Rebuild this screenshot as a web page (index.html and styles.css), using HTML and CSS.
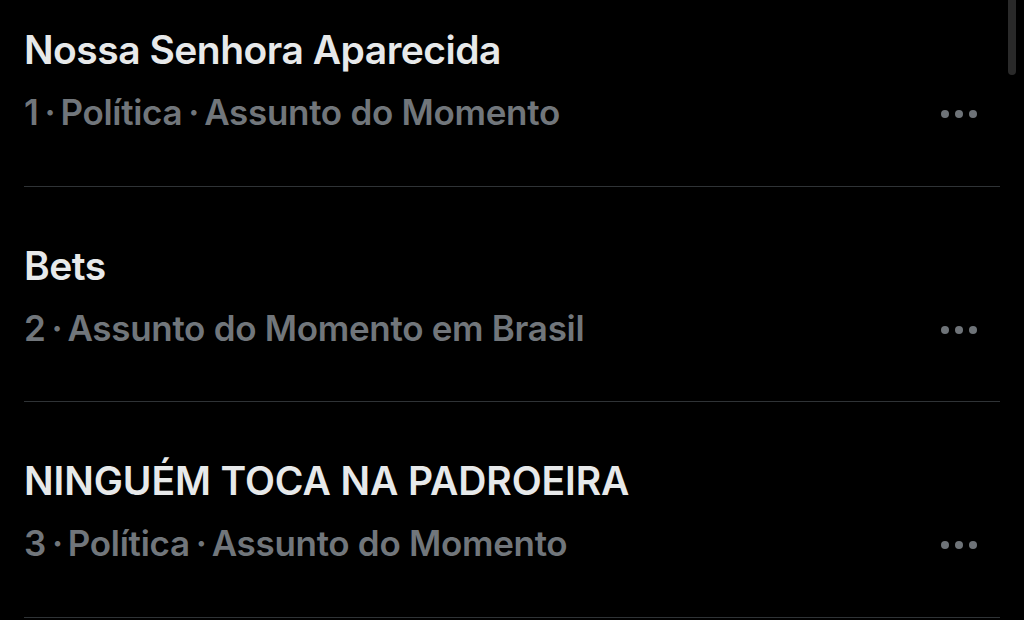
FILE: index.html
```html
<!DOCTYPE html>
<html>
<head>
<meta charset="utf-8">
<link rel="stylesheet" href="styles.css">
</head>
<body>
<div class="scroller">
  <div class="list">
    <div class="trend">
      <div class="text">
        <div class="title">Nossa Senhora Aparecida</div>
        <div class="meta">1<span class="dot">·</span>Política<span class="dot">·</span>Assunto do Momento</div>
      </div>
      <div class="more"><span></span><span></span><span></span></div>
    </div>
    <div class="trend">
      <div class="text">
        <div class="title">Bets</div>
        <div class="meta">2<span class="dot">·</span>Assunto do Momento em Brasil</div>
      </div>
      <div class="more"><span></span><span></span><span></span></div>
    </div>
    <div class="trend">
      <div class="text">
        <div class="title caps">NINGUÉM TOCA NA PADROEIRA</div>
        <div class="meta">3<span class="dot">·</span>Política<span class="dot">·</span>Assunto do Momento</div>
      </div>
      <div class="more"><span></span><span></span><span></span></div>
    </div>
  </div>
  <div class="scrollbar"></div>
</div>
</body>
</html>
```
FILE: styles.css
```css
html, body {
  margin: 0;
  padding: 0;
  background: #000;
  height: 100%;
  overflow: hidden;
}
.scroller {
  position: relative;
  width: 1024px;
  height: 620px;
  overflow: hidden;
  font-family: Inter, "Noto Sans", sans-serif;
}
.list {
  margin-top: -29px;
  padding: 0 24px;
}
.trend {
  display: flex;
  align-items: flex-end;
  border-bottom: 1px solid #2f3336;
  padding: 48px 0 42.5px;
}
.text {
  flex: 1;
}
.title {
  color: #e7e9ea;
  font-weight: 600;
  font-size: 39px;
  line-height: 62px;
  letter-spacing: -0.5px;
}
.title.caps {
  letter-spacing: -0.1px;
}
.meta {
  color: #71767b;
  font-weight: 600;
  font-size: 35px;
  line-height: 62px;
  letter-spacing: -0.3px;
}
.dot {
  display: inline-block;
  padding: 0 5px 0 6px;
}
.more {
  display: flex;
  gap: 6px;
  padding: 0 23px 25px 0;
}
.more span {
  width: 8px;
  height: 8px;
  border-radius: 50%;
  background: #6e7378;
}
.scrollbar {
  position: absolute;
  top: -8px;
  right: 8px;
  width: 8px;
  height: 83px;
  border-radius: 4px;
  background: #2a2a2a;
}
```
